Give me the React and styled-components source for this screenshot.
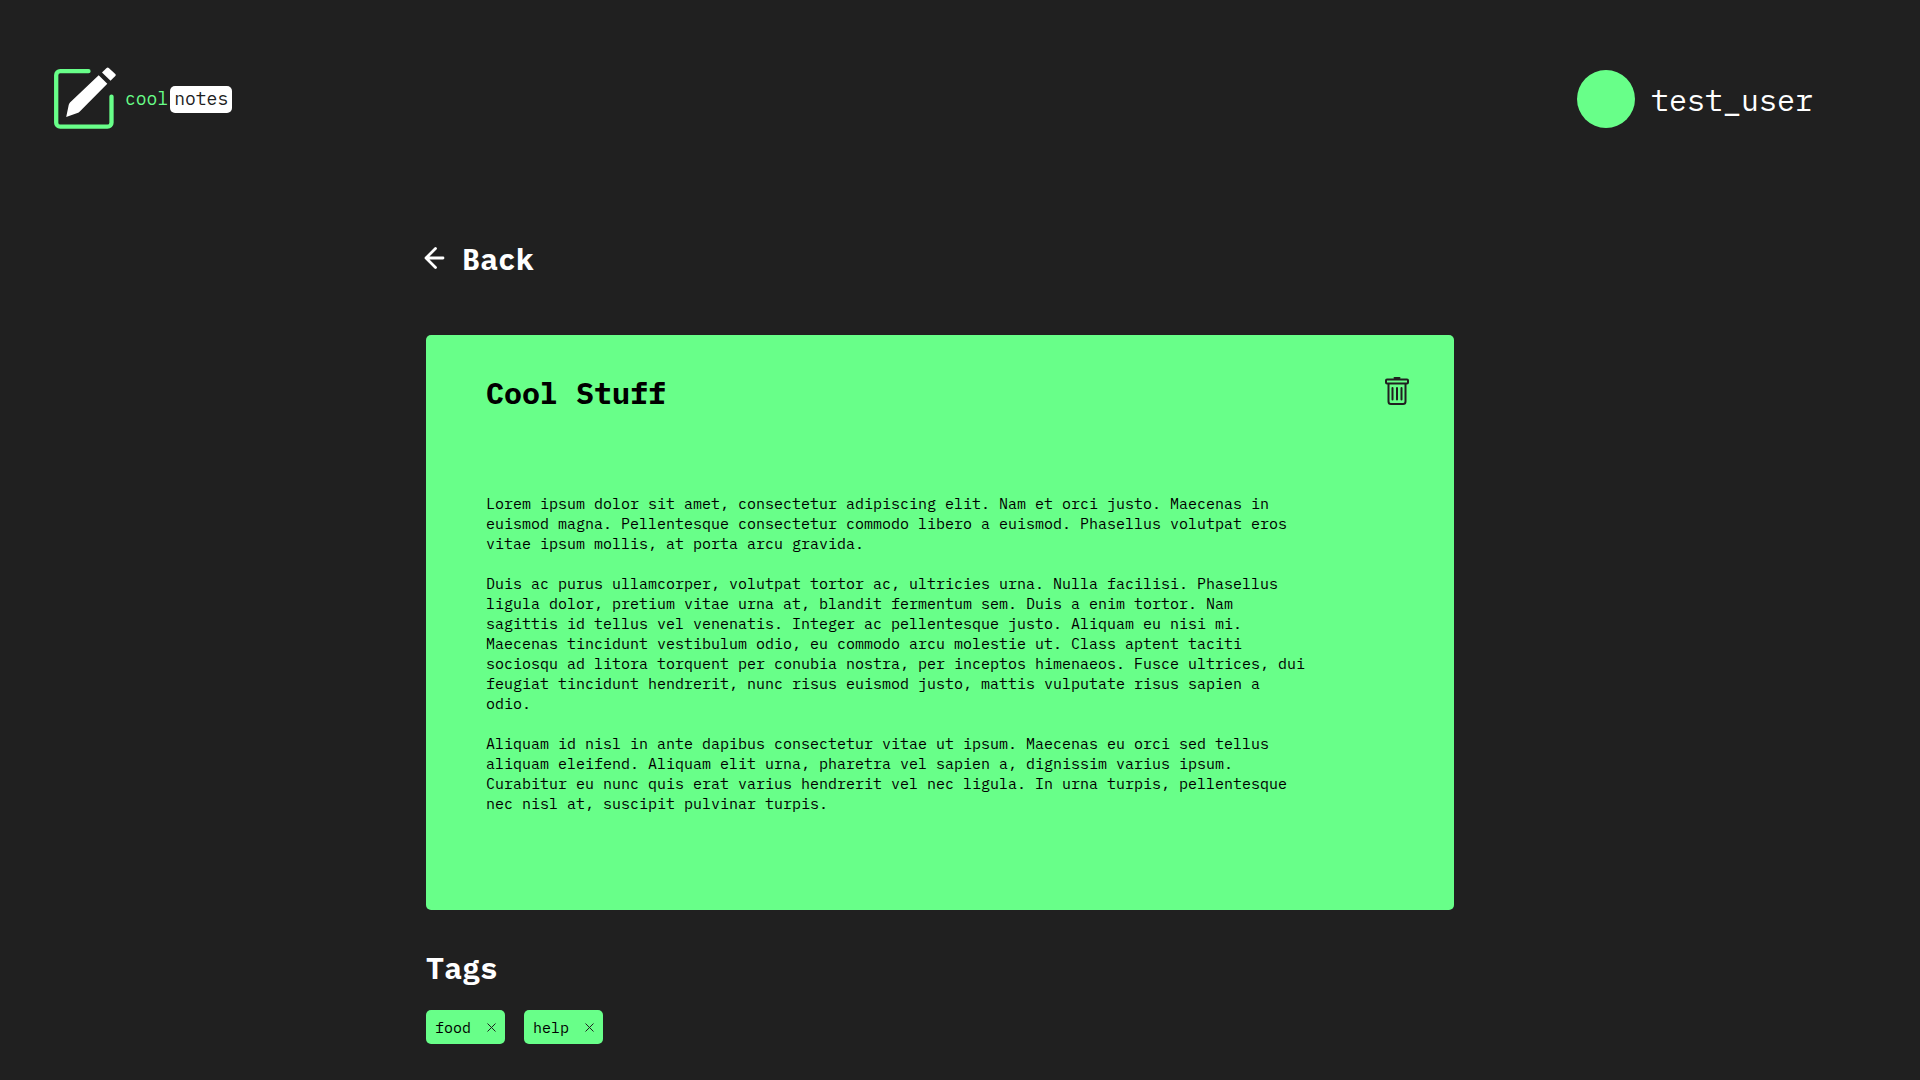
import React, { useState } from "react";
import styled, { createGlobalStyle } from "styled-components";

const green = "#68ff89";
const dark = "#202020";

const GlobalStyle = createGlobalStyle`
  *, *::before, *::after { box-sizing: border-box; }
  body {
    margin: 0;
    background: ${dark};
    color: #fff;
    font-family: "IBM Plex Mono", "Liberation Mono", monospace;
    font-size: 15px;
    line-height: 20px;
  }
  h1, h2, p, ul { margin: 0; padding: 0; }
`;

const Header = styled.header`
  display: flex;
  align-items: center;
  justify-content: space-between;
  padding: 67px 107px 0 54px;
`;

const Logo = styled.a`
  display: flex;
  align-items: center;
  gap: 9px;
  color: ${green};
  font-size: 18px;
  line-height: 26px;
  text-decoration: none;
`;

const Wordmark = styled.span`
  display: flex;
  gap: 2px;
  padding-top: 3px;
`;

const Badge = styled.span`
  padding: 0 4px 1px;
  border-radius: 5px;
  background: #fff;
  color: ${dark};
`;

const User = styled.div`
  display: flex;
  align-items: center;
  gap: 16px;
  padding-top: 2px;
`;

const Avatar = styled.span`
  width: 58px;
  height: 58px;
  border-radius: 50%;
  background: ${green};
`;

const UserName = styled.span`
  padding-top: 2px;
  font-size: 30px;
  line-height: 40px;
`;

const Main = styled.main`
  display: flex;
  flex-direction: column;
  align-items: flex-start;
  width: 100%;
  max-width: 1068px;
  margin: 0 auto;
  padding: 110px 40px 36px 0;
`;

const BackLink = styled.a`
  display: flex;
  align-items: center;
  gap: 16px;
  margin-bottom: 56px;
  color: #fff;
  font-size: 30px;
  font-weight: 700;
  line-height: 40px;
  text-decoration: none;

  svg { margin-bottom: 2px; overflow: visible; }
`;

const Note = styled.article`
  width: 100%;
  padding: 38px 45px 96px 60px;
  border-radius: 5px;
  background: ${green};
  color: #000;
`;

const NoteHeader = styled.div`
  display: flex;
  align-items: flex-start;
  justify-content: space-between;
  margin-bottom: 81px;
`;

const Heading = styled.h2`
  font-size: 30px;
  font-weight: 700;
  line-height: 40px;
`;

const IconButton = styled.button`
  display: flex;
  align-items: center;
  height: ${(p) => p.$height}px;
  padding: 0;
  border: 0;
  background: none;
  color: ${dark};
  cursor: pointer;
`;

const NoteBody = styled.div`
  display: flex;
  flex-direction: column;
  gap: 20px;
  max-width: 824px;
`;

const TagSection = styled.section`
  display: flex;
  flex-direction: column;
  gap: 22px;
  margin-top: 38px;
`;

const TagList = styled.ul`
  display: flex;
  flex-wrap: wrap;
  gap: 19px;
  list-style: none;
`;

const Tag = styled.li`
  display: flex;
  align-items: flex-start;
  gap: 16px;
  padding: 8px 9px 6px 9px;
  border-radius: 5px;
  background: ${green};
  color: #000;
`;

const LogoIcon = () => (
  <svg width="62" height="62" viewBox="0 0 62 62" aria-hidden="true">
    <path
      d="M34.5 4.2H6.2a4 4 0 0 0-4 4V55.7a4 4 0 0 0 4 4H53.5a4 4 0 0 0 4-4V29.6"
      fill="none"
      stroke={green}
      strokeWidth="4.3"
      strokeLinecap="round"
    />
    <path
      d="M12.2 49.9L14.7 38Q15 36.5 16 35.5L44.7 8.200L53.3 16.7L25.8 44.500Q24.800 45.600 23.400 46Z"
      fill="#fff"
    />
    <path
      d="M48 5.6L52.6.9Q53.7-.1 54.8.9L61.3 7Q62.2 8 61.3 9L56.5 13.7Z"
      fill="#fff"
    />
  </svg>
);

const ArrowIcon = () => (
  <svg width="20" height="24" viewBox="0 0 20 24" fill="none" stroke="#fff" strokeWidth="2.8" strokeLinecap="round" strokeLinejoin="round" aria-hidden="true">
    <path d="M9.5 2.5L0 12L9.5 21.5M0 12H17" />
  </svg>
);

const TrashIcon = () => (
  <svg width="24" height="28" viewBox="0 0 24 28" fill="none" stroke="currentColor" strokeWidth="2" strokeLinejoin="round" strokeLinecap="round" aria-hidden="true">
    <path d="M9.5 1H14.5" />
    <rect x="1" y="2.5" width="22" height="4" rx="1" />
    <path d="M3.5 7V24.5a2.5 2.5 0 0 0 2.5 2.5H18a2.5 2.5 0 0 0 2.5-2.5V7M7.5 11V22.5M12 11V22.5M16.5 11V22.5" />
  </svg>
);

const CloseIcon = () => (
  <svg width="9" height="9" viewBox="0 0 9 9" stroke="currentColor" fill="none" aria-hidden="true">
    <path d="M.5.5L8.5 8.5M8.5.5L.5 8.5" />
  </svg>
);

const paragraphs = [
  "Lorem ipsum dolor sit amet, consectetur adipiscing elit. Nam et orci justo. Maecenas in euismod magna. Pellentesque consectetur commodo libero a euismod. Phasellus volutpat eros vitae ipsum mollis, at porta arcu gravida.",
  "Duis ac purus ullamcorper, volutpat tortor ac, ultricies urna. Nulla facilisi. Phasellus ligula dolor, pretium vitae urna at, blandit fermentum sem. Duis a enim tortor. Nam sagittis id tellus vel venenatis. Integer ac pellentesque justo. Aliquam eu nisi mi. Maecenas tincidunt vestibulum odio, eu commodo arcu molestie ut. Class aptent taciti sociosqu ad litora torquent per conubia nostra, per inceptos himenaeos. Fusce ultrices, dui feugiat tincidunt hendrerit, nunc risus euismod justo, mattis vulputate risus sapien a odio.",
  "Aliquam id nisl in ante dapibus consectetur vitae ut ipsum. Maecenas eu orci sed tellus aliquam eleifend. Aliquam elit urna, pharetra vel sapien a, dignissim varius ipsum. Curabitur eu nunc quis erat varius hendrerit vel nec ligula. In urna turpis, pellentesque nec nisl at, suscipit pulvinar turpis.",
];

export default function App() {
  const [tags, setTags] = useState(["food", "help"]);

  return (
    <>
      <GlobalStyle />
      <Header>
        <Logo href="#">
          <LogoIcon />
          <Wordmark>
            <span>cool</span>
            <Badge>notes</Badge>
          </Wordmark>
        </Logo>
        <User>
          <Avatar />
          <UserName>test_user</UserName>
        </User>
      </Header>
      <Main>
        <BackLink href="#">
          <ArrowIcon />
          Back
        </BackLink>
        <Note>
          <NoteHeader>
            <Heading as="h1">Cool Stuff</Heading>
            <IconButton type="button" $height={36} aria-label="Delete note">
              <TrashIcon />
            </IconButton>
          </NoteHeader>
          <NoteBody>
            {paragraphs.map((text) => (
              <p key={text}>{text}</p>
            ))}
          </NoteBody>
        </Note>
        <TagSection>
          <Heading>Tags</Heading>
          <TagList>
            {tags.map((tag) => (
              <Tag key={tag}>
                {tag}
                <IconButton
                  type="button"
                  $height={18}
                  aria-label={`Remove ${tag}`}
                  onClick={() => setTags(tags.filter((t) => t !== tag))}
                >
                  <CloseIcon />
                </IconButton>
              </Tag>
            ))}
          </TagList>
        </TagSection>
      </Main>
    </>
  );
}
